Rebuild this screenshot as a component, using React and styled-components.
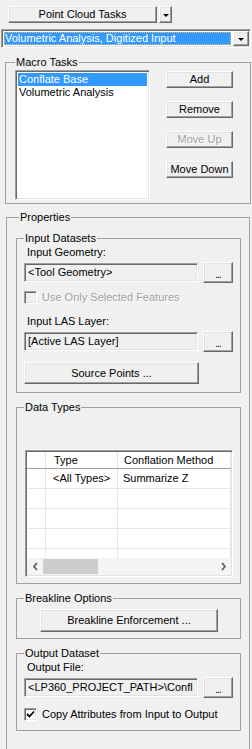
import React from "react";
import styled, { createGlobalStyle, css } from "styled-components";

const colors = {
  face: "#f0f0f0",
  shadow: "#a0a0a0",
  dark: "#696969",
  light: "#e3e3e3",
  white: "#ffffff",
  select: "#3399ff",
  disabled: "#a0a0a0",
  gridLine: "#e6e6e6",
};

const GlobalStyle = createGlobalStyle`
  * { box-sizing: border-box; }
  html, body {
    margin: 0;
    padding: 0;
    overflow: hidden;
    background: ${colors.face};
  }
  body {
    font-family: "Liberation Sans", Arial, sans-serif;
    font-size: 11px;
    line-height: 13px;
    color: #000;
  }
`;

const raised = css`
  border: 1px solid;
  border-color: ${colors.white} ${colors.dark} ${colors.dark} ${colors.white};
  box-shadow: inset -1px -1px 0 ${colors.shadow}, inset 1px 1px 0 ${colors.light};
`;

const sunken = css`
  border: 1px solid;
  border-color: ${colors.shadow} ${colors.white} ${colors.white} ${colors.shadow};
  box-shadow: inset 1px 1px 0 ${colors.dark}, inset -1px -1px 0 ${colors.light};
`;

const Panel = styled.div`
  width: 252px;
  height: 749px;
  overflow: hidden;
  display: flex;
  flex-direction: column;
  align-items: flex-start;
`;

const TopBar = styled.div`
  display: flex;
  gap: 2px;
  padding: 6px 0 0 8px;
`;

const Button = styled.button`
  font-family: inherit;
  font-size: 11px;
  font-weight: 400;
  line-height: 13px;
  color: ${(p) => (p.disabled ? colors.disabled : "#000")};
  text-shadow: ${(p) => (p.disabled ? `1px 1px 0 ${colors.white}` : "none")};
  background: ${colors.face};
  width: ${(p) => p.$w}px;
  height: ${(p) => p.$h || 17}px;
  margin: ${(p) => p.$top || 0}px 0 0 ${(p) => p.$left || 0}px;
  padding: 0;
  flex-shrink: 0;
  display: flex;
  align-items: center;
  justify-content: center;
  ${raised}
`;

const Triangle = styled.span`
  width: 0;
  height: 0;
  border-left: ${(p) => p.$size}px solid transparent;
  border-right: ${(p) => p.$size}px solid transparent;
  border-top: ${(p) => p.$size}px solid #000;
  margin-top: 1px;
`;

const Combo = styled.div`
  margin: 6px 0 0 1px;
  width: 250px;
  height: 19px;
  display: flex;
  background: ${colors.white};
  padding: 1px;
  ${sunken}
`;

const ComboValue = styled.div`
  flex: 1;
  margin: 1px 2px 1px 1px;
  padding-left: 1px;
  background: ${colors.select};
  color: ${colors.white};
  outline: 1px dotted #e8c070;
  outline-offset: -1px;
  white-space: nowrap;
  overflow: hidden;
`;

const ComboArrow = styled.div`
  width: 16px;
  background: ${colors.face};
  display: flex;
  align-items: center;
  justify-content: center;
  ${raised}
`;

const GroupBox = styled.fieldset`
  margin: ${(p) => p.$top || 0}px 0 0 ${(p) => p.$left || 0}px;
  width: ${(p) => p.$w}px;
  padding: 0;
  min-width: 0;
  flex-shrink: 0;
  border: 1px solid ${colors.shadow};
`;

const Caption = styled.legend`
  margin-left: ${(p) => p.$indent}px;
  padding: 0 1px;
  line-height: 13px;
`;

const GroupBody = styled.div`
  display: flex;
  flex-direction: ${(p) => (p.$row ? "row" : "column")};
  align-items: flex-start;
  gap: ${(p) => p.$gap || 0}px;
  padding: ${(p) => p.$pad};
`;

const ListBox = styled.div`
  width: 135px;
  height: 130px;
  background: ${colors.white};
  padding: 2px;
  flex-shrink: 0;
  ${sunken}
`;

const ListItem = styled.div`
  height: 13px;
  padding-left: 1px;
  white-space: nowrap;
  background: ${(p) => (p.$selected ? colors.select : "transparent")};
  color: ${(p) => (p.$selected ? colors.white : "#000")};
`;

const ButtonColumn = styled.div`
  display: flex;
  flex-direction: column;
  gap: 13px;
  margin: 1px 0 0 16px;
`;

const Label = styled.div`
  margin: ${(p) => p.$top || 0}px 0 0 ${(p) => p.$left ?? 10}px;
  white-space: nowrap;
`;

const FieldRow = styled.div`
  display: flex;
  align-items: center;
  height: 21px;
  margin: ${(p) => p.$top || 0}px 0 0 7px;
`;

const TextBox = styled.div`
  width: 174px;
  height: 19px;
  padding: 2px 0 0 3px;
  background: ${colors.face};
  white-space: nowrap;
  overflow: hidden;
  text-overflow: clip;
  ${sunken}
`;

const Dots = styled.span`
  margin-top: 3px;
  letter-spacing: -1px;
  font-size: 10px;
`;

const CheckRow = styled.div`
  display: flex;
  align-items: center;
  height: 14px;
  margin: ${(p) => p.$top || 0}px 0 0 7px;
  color: ${(p) => (p.$disabled ? colors.disabled : "#000")};
  text-shadow: ${(p) => (p.$disabled ? `1px 1px 0 ${colors.white}` : "none")};
`;

const CheckBox = styled.span`
  width: 13px;
  height: 13px;
  margin-right: 5px;
  display: flex;
  align-items: center;
  justify-content: center;
  background: ${(p) => (p.$disabled ? colors.face : colors.white)};
  ${sunken}
`;

const Grid = styled.div`
  width: 208px;
  height: 127px;
  background: ${colors.white};
  padding: 1px;
  display: flex;
  flex-direction: column;
  ${sunken}
`;

const GridRow = styled.div`
  display: flex;
  flex-shrink: 0;
  height: ${(p) => (p.$header ? 17 : 20)}px;
  border-bottom: 1px solid ${(p) => (p.$header ? colors.shadow : colors.gridLine)};
`;

const GridCell = styled.div`
  width: ${(p) => (p.$w ? `${p.$w}px` : "auto")};
  flex: ${(p) => (p.$w ? "none" : 1)};
  padding: ${(p) => (p.$header ? 2 : 3)}px 0 0 ${(p) => p.$pad || 0}px;
  border-right: 1px solid ${(p) => (p.$header ? colors.light : colors.gridLine)};
  white-space: nowrap;
  overflow: hidden;
`;

const GridRows = styled.div`
  flex: 1;
  overflow: hidden;
`;

const HScroll = styled.div`
  height: 17px;
  flex-shrink: 0;
  display: flex;
  background: #f4f4f4;
`;

const ScrollArrow = styled.div`
  width: 16px;
  display: flex;
  align-items: center;
  justify-content: center;
`;

const ScrollThumb = styled.div`
  width: 55px;
  margin: 1px 0;
  background: #cdcdcd;
`;

const ScrollTrack = styled.div`
  flex: 1;
`;

function Chevron({ dir }) {
  const pts = dir === "left" ? "5,1 2,4.5 5,8" : "2,1 5,4.5 2,8";
  return (
    <svg width="7" height="9" viewBox="0 0 7 9">
      <polyline points={pts} fill="none" stroke="#606060" strokeWidth="1.8" />
    </svg>
  );
}

function Check() {
  return (
    <svg width="9" height="9" viewBox="0 0 9 9">
      <polyline points="1,4 3.5,6.5 8,1.5" fill="none" stroke="#000" strokeWidth="1.8" />
    </svg>
  );
}

function PathField({ value }) {
  return (
    <FieldRow $top={3}>
      <TextBox>{value}</TextBox>
      <Button $w={30} $h={21} $left={5}>
        <Dots>...</Dots>
      </Button>
    </FieldRow>
  );
}

const gridRows = [
  { type: "<All Types>", method: "Summarize Z" },
  { type: "", method: "" },
  { type: "", method: "" },
  { type: "", method: "" },
  { type: "", method: "" },
];

export default function App() {
  return (
    <Panel>
      <GlobalStyle />
      <TopBar>
        <Button $w={149}>Point Cloud Tasks</Button>
        <Button $w={13}>
          <Triangle $size={3} />
        </Button>
      </TopBar>

      <Combo>
        <ComboValue>Volumetric Analysis, Digitized Input</ComboValue>
        <ComboArrow>
          <Triangle $size={3.5} />
        </ComboArrow>
      </Combo>

      <GroupBox $top={8} $left={5} $w={246}>
        <Caption $indent={9}>Macro Tasks</Caption>
        <GroupBody $row $pad="1px 0 3px 9px">
          <ListBox>
            <ListItem $selected>Conflate Base</ListItem>
            <ListItem>Volumetric Analysis</ListItem>
          </ListBox>
          <ButtonColumn>
            <Button $w={67}>Add</Button>
            <Button $w={67}>Remove</Button>
            <Button $w={67} disabled>
              Move Up
            </Button>
            <Button $w={67}>Move Down</Button>
          </ButtonColumn>
        </GroupBody>
      </GroupBox>

      <GroupBox $top={7} $left={6} $w={244}>
        <Caption $indent={12}>Properties</Caption>
        <GroupBody $gap={8} $pad="8px 0 40px 9px">
          <GroupBox $w={225}>
            <Caption $indent={7}>Input Datasets</Caption>
            <GroupBody $pad="1px 0 8px 0">
              <Label>Input Geometry:</Label>
              <PathField value="<Tool Geometry>" />
              <CheckRow $top={7} $disabled>
                <CheckBox $disabled />
                Use Only Selected Features
              </CheckRow>
              <Label $top={11}>Input LAS Layer:</Label>
              <PathField value="[Active LAS Layer]" />
              <Button $w={175} $h={22} $top={10} $left={7}>
                Source Points ...
              </Button>
            </GroupBody>
          </GroupBox>

          <GroupBox $w={225}>
            <Caption $indent={7}>Data Types</Caption>
            <GroupBody $pad="36px 0 6px 8px">
              <Grid>
                <GridRow $header>
                  <GridCell $header $w={19} />
                  <GridCell $header $w={72} $pad={8}>
                    Type
                  </GridCell>
                  <GridCell $header $pad={6}>
                    Conflation Method
                  </GridCell>
                </GridRow>
                <GridRows>
                  {gridRows.map((r, i) => (
                    <GridRow key={i}>
                      <GridCell $w={19} />
                      <GridCell $w={72} $pad={7}>
                        {r.type}
                      </GridCell>
                      <GridCell $pad={5}>{r.method}</GridCell>
                    </GridRow>
                  ))}
                </GridRows>
                <HScroll>
                  <ScrollArrow>
                    <Chevron dir="left" />
                  </ScrollArrow>
                  <ScrollThumb />
                  <ScrollTrack />
                  <ScrollArrow>
                    <Chevron dir="right" />
                  </ScrollArrow>
                </HScroll>
              </Grid>
            </GroupBody>
          </GroupBox>

          <GroupBox $w={225}>
            <Caption $indent={7}>Breakline Options</Caption>
            <GroupBody $pad="4px 0 6px 23px">
              <Button $w={178} $h={23}>
                Breakline Enforcement ...
              </Button>
            </GroupBody>
          </GroupBox>

          <GroupBox $w={225}>
            <Caption $indent={7}>Output Dataset</Caption>
            <GroupBody $pad="1px 0 9px 0">
              <Label>Output File:</Label>
              <PathField value={"<LP360_PROJECT_PATH>\\Confl"} />
              <CheckRow $top={9}>
                <CheckBox>
                  <Check />
                </CheckBox>
                Copy Attributes from Input to Output
              </CheckRow>
            </GroupBody>
          </GroupBox>
        </GroupBody>
      </GroupBox>
    </Panel>
  );
}
